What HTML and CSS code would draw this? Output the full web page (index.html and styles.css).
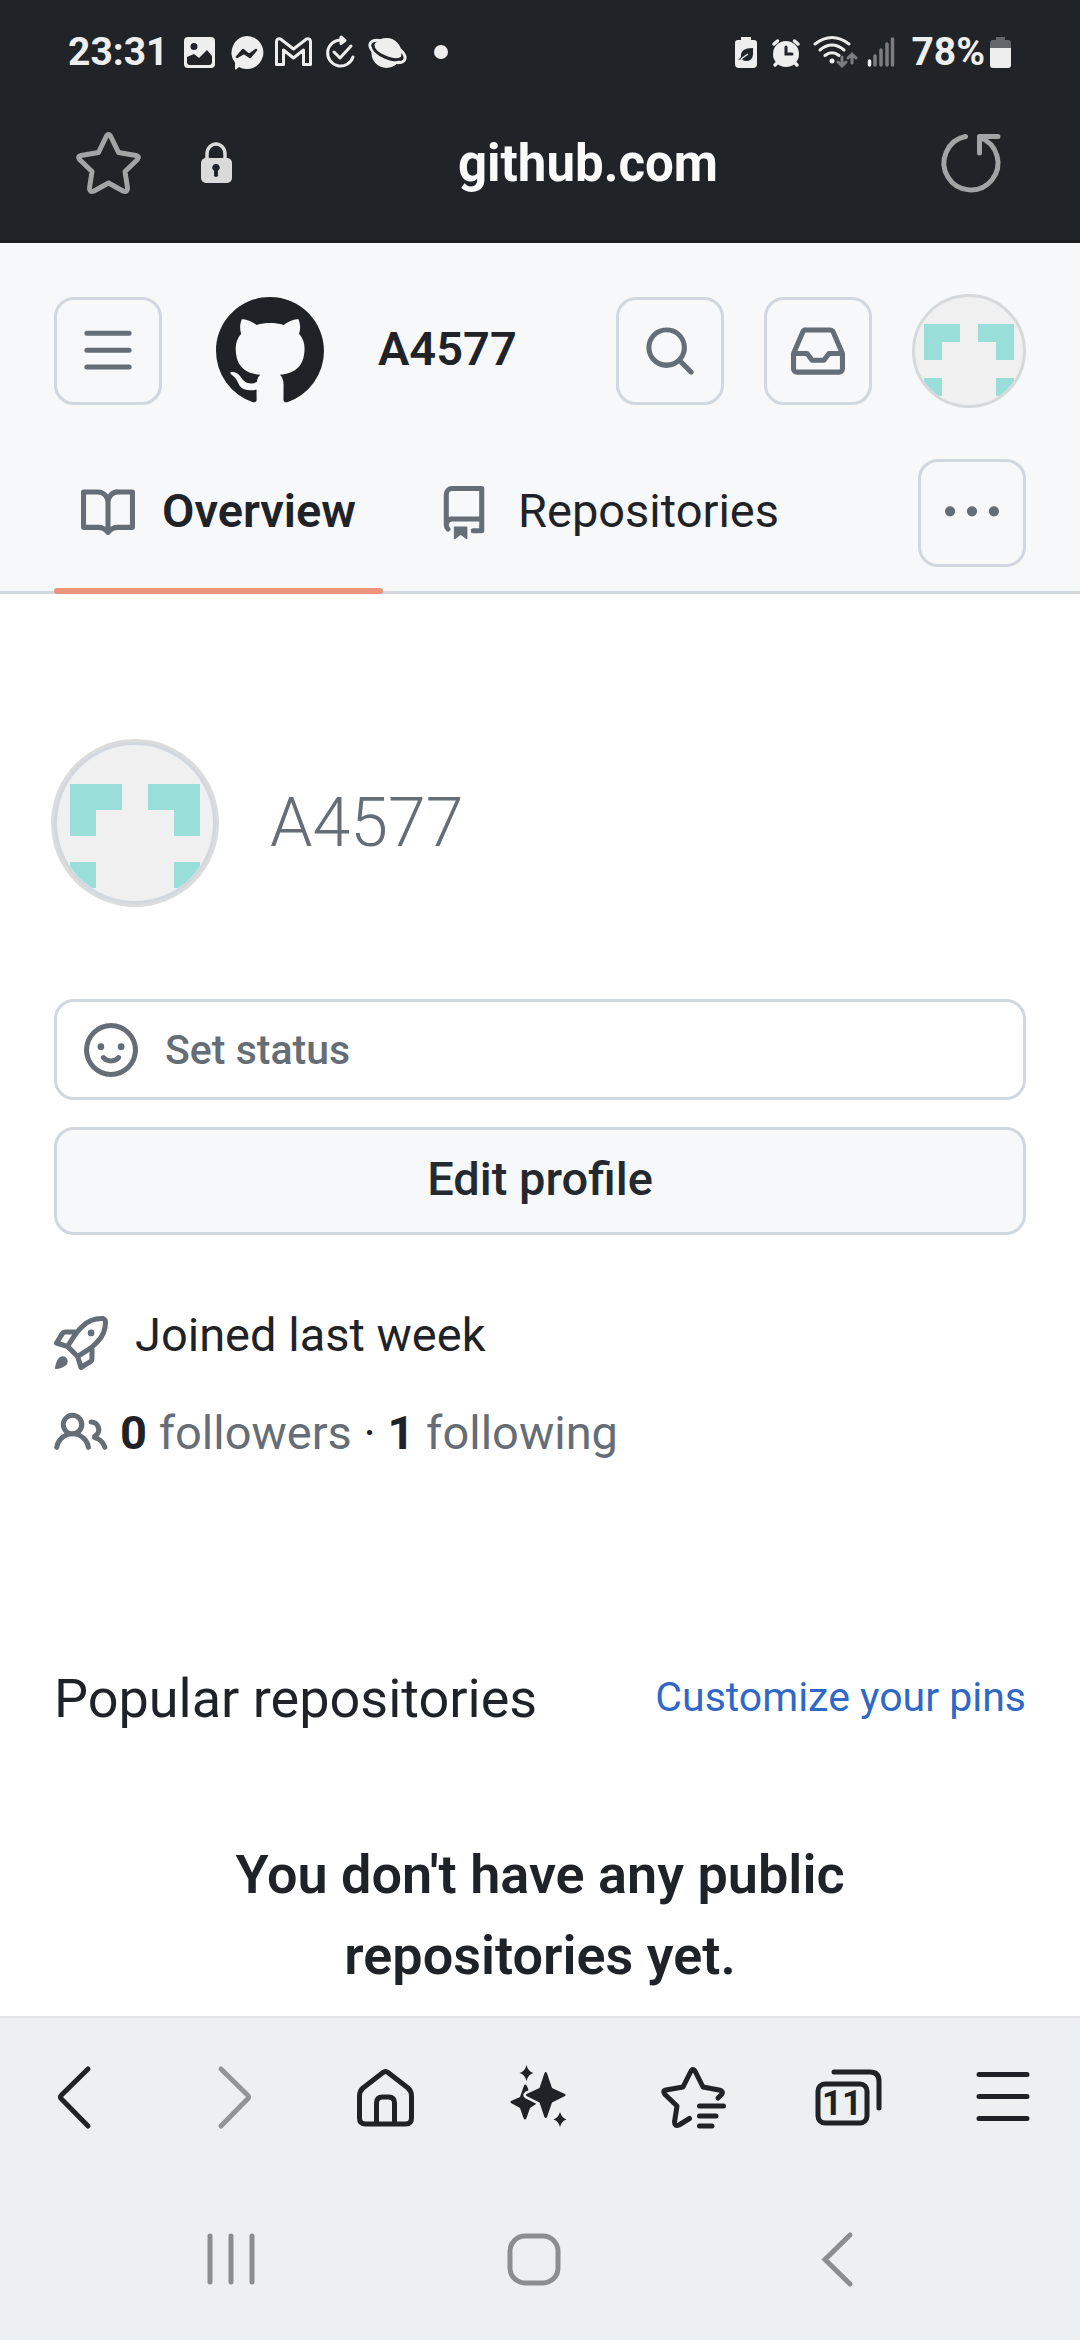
FILE: index.html
```html
<!DOCTYPE html>
<html lang="en">
<head>
<meta charset="utf-8">
<meta name="viewport" content="width=device-width, initial-scale=1">
<title>A4577</title>
<link rel="stylesheet" href="styles.css">
</head>
<body>
<div class="browser-top">
  <div class="status-bar">
    <div class="status-left">
      <span class="clock">23:31</span>
      <svg class="status-icon" viewBox="0 0 47 40" fill="#eee"><path fill-rule="evenodd" d="M12 5h23a4 4 0 0 1 4 4v23a4 4 0 0 1-4 4H12a4 4 0 0 1-4-4V9a4 4 0 0 1 4-4Zm6 6a3.500 3.500 0 1 0 0 7 3.500 3.500 0 0 0 0-7Zm-7 14v5q0 3 3 3h19q3 0 3-3v-6l-5-6-8 8-5-4Z"/></svg>
      <svg class="status-icon" viewBox="0 0 47 40"><path fill="#eee" d="M24 4a16.500 16.500 0 1 1-8 31l-3 2.500q-1 .5-1-1v-6A16.500 16.500 0 0 1 24 4Z"/><path d="M14 25l6-7 6 5 7-5-6 7-6-4Z" fill="#202328" stroke="#202328" stroke-width="2.500" stroke-linejoin="round"/></svg>
      <svg class="status-icon" viewBox="0 0 47 40" fill="none" stroke="#eee" stroke-width="3" stroke-linejoin="round"><path d="M6.500 10q0-4 4-3l13 10 13-10q4-1 4 3v22.500h-7V18l-10 8-10-8v14.500h-7Z"/></svg>
      <svg class="status-icon" viewBox="0 0 47 40" fill="none" stroke="#eee" stroke-width="3" stroke-linecap="round" stroke-linejoin="round"><path d="M24 8A13 13 0 1 0 36 25M17 20l6 6 11-12"/><path d="M24 5l4 3.500-4 3Z" fill="#eee"/></svg>
      <svg class="status-icon" viewBox="0 0 47 40" fill="none"><circle cx="22.500" cy="21" r="15" fill="#eee"/><ellipse cx="23.500" cy="19.500" rx="19" ry="8.500" transform="rotate(25 23.500 19.500)" stroke="#eee" stroke-width="3"/><path d="M9 13Q9 20 21 25T37.500 26" stroke="#202328" stroke-width="3" stroke-linecap="round"/></svg>
      <svg class="status-dot" viewBox="0 0 60 40" fill="#eee"><circle cx="30" cy="20" r="7"/></svg>
    </div>
    <div class="status-right">
      <svg width="32" height="40" viewBox="0 0 32 40"><path fill="#eee" d="M11 5h10v3h3q3 0 3 3v21q0 4-4 4H9q-4 0-4-4V11q0-3 3-3h3Z"/><path fill="#202328" d="M23 16v7q-1 6-7 6-3 0-4-2l-4 1 3-3q-1-9 12-9Z"/><path d="M11 27l7-5" stroke="#eee" stroke-width="1.500"/></svg>
      <svg width="32" height="40" viewBox="0 0 32 40" stroke-linecap="round"><circle cx="16" cy="22" r="13" fill="#eee"/><path d="M4 12l3.500-3M28 12l-3.500-3M5 33l4-4M27 33l-4-4" stroke="#eee" stroke-width="3.500"/><path d="M16 15v7h6" stroke="#202328" stroke-width="3" fill="none"/></svg>
      <svg width="49" height="40" viewBox="0 0 49 40" fill="none" stroke-width="3" stroke-linecap="round"><path d="M5 12Q22 -1 39 12M10 18Q22 8 34 18M15 23.500Q22 18 29 23.500" stroke="#eee"/><circle cx="22" cy="29" r="2.500" fill="#eee"/><path d="M32 25v9m-4-4l4 4 4-4M42 31v-9m-4 4l4-4 4 4" stroke="#7b7d80"/></svg>
      <svg width="30" height="40" viewBox="0 0 30 40" stroke="#7b7d80" stroke-width="3.500" stroke-linecap="round"><path d="M2.500 29v4" stroke="#eee"/><path d="M8 24v9M14 18v15M20 12v21M25.500 7v26"/></svg>
      <span class="battery-level">78%</span>
      <svg width="23" height="40" viewBox="0 0 23 40"><path fill="#63666a" d="M7 5h9v3h3q3 0 3 3v7H1v-7q0-3 3-3h3Z"/><path fill="#eee" d="M1 16h21v17q0 3-3 3H4q-3 0-3-3Z"/></svg>
    </div>
  </div>
  <div class="url-bar">
    <button class="plain" aria-label="Bookmark"><svg width="72" height="72" viewBox="0 0 72 72" fill="none" stroke="#a3a4a6" stroke-width="5" stroke-linejoin="round"><path d="M33.500 12q3-7 6 0L46.500 26.500 64 29.500q4 1 1.500 4L53 45.500 55.500 62q0 5-4.500 3L36.500 57 22 65q-4.500 2-4.500-3L20 45.500 7.500 33.500Q5 30.500 9 29.500L26.500 26.500Z"/></svg></button>
    <svg width="48" height="72" viewBox="0 0 48 72"><path d="M15 36V28a9 10 0 0 1 18 0v8" fill="none" stroke="#dadada" stroke-width="3.500"/><rect x="9" y="32" width="31" height="25" rx="5" fill="#dadada"/><path d="M24 38a3.500 3.500 0 0 1 2 6.500V50q-2 2-4 0V44.500A3.500 3.500 0 0 1 24 38Z" fill="#202328"/></svg>
    <span class="site">github.com</span>
    <button class="plain" aria-label="Reload"><svg width="72" height="72" viewBox="0 0 72 72" fill="none" stroke="#a3a4a6" stroke-width="5" stroke-linecap="round" stroke-linejoin="round"><path d="M29.500 10.500A27 27 0 1 0 44 11.500M62 10.500H43.500V27"/></svg></button>
  </div>
</div>

<header class="page-header">
  <div class="header-row">
    <button class="square" aria-label="Open menu"><svg class="octicon" viewBox="0 0 16 16"><path d="M1 2.750A.75.75 0 0 1 1.750 2h12.500a.75.75 0 0 1 0 1.500H1.750A.75.75 0 0 1 1 2.750Zm0 5A.75.75 0 0 1 1.750 7h12.500a.75.75 0 0 1 0 1.500H1.750A.75.75 0 0 1 1 7.750ZM1.750 12h12.500a.75.75 0 0 1 0 1.500H1.750a.75.75 0 0 1 0-1.500Z"/></svg></button>
    <a class="logo" href="#" aria-label="Homepage"><svg width="108" height="108" viewBox="0 0 16 16"><path d="M8 0c4.420 0 8 3.580 8 8a8.013 8.013 0 0 1-5.450 7.590c-.4.080-.55-.17-.55-.38 0-.27.010-1.130.010-2.200 0-.75-.25-1.230-.54-1.480 1.780-.2 3.650-.88 3.650-3.950 0-.88-.31-1.590-.82-2.150.080-.2.360-1.020-.08-2.120 0 0-.67-.22-2.200.82-.64-.18-1.320-.27-2-.27-.68 0-1.360.09-2 .27-1.530-1.030-2.200-.82-2.200-.82-.44 1.100-.16 1.920-.08 2.120-.51.56-.82 1.280-.82 2.150 0 3.060 1.860 3.750 3.640 3.950-.23.2-.44.55-.51 1.070-.46.210-1.610.55-2.330-.66-.15-.24-.6-.83-1.230-.82-.67.010-.27.380.010.530.340.190.730.9.820 1.130.160.450.680 1.310 2.690.940 0 .67.010 1.300.010 1.490 0 .210-.15.450-.55.380A7.995 7.995 0 0 1 0 8c0-4.420 3.580-8 8-8Z"/></svg></a>
    <a class="context" href="#">A4577</a>
    <div class="header-actions">
      <button class="square" aria-label="Search"><svg class="octicon" viewBox="0 0 16 16"><path d="M10.680 11.740a6 6 0 0 1-7.922-8.982 6 6 0 0 1 8.982 7.922l3.040 3.040a.749.749 0 0 1-.326 1.275.749.749 0 0 1-.734-.215ZM11.500 7a4.499 4.499 0 1 0-8.997 0A4.499 4.499 0 0 0 11.500 7Z"/></svg></button>
      <button class="square" aria-label="Notifications"><svg class="octicon" viewBox="0 0 16 16"><path d="M2.800 2.060A1.750 1.750 0 0 1 4.410 1h7.180c.7 0 1.333.417 1.610 1.060l2.740 6.395c.04.093.06.194.06.295v4.500A1.750 1.750 0 0 1 14.250 15H1.750A1.750 1.750 0 0 1 0 13.250v-4.500c0-.101.02-.202.06-.295Zm1.610.44a.25.25 0 0 0-.23.152L1.887 8H4.750a.75.75 0 0 1 .6.3L6.625 10h2.750l1.275-1.700a.75.75 0 0 1 .6-.3h2.863L11.820 2.652a.25.25 0 0 0-.23-.152Zm10.090 7h-2.875l-1.275 1.700a.75.75 0 0 1-.6.3h-3.500a.75.75 0 0 1-.6-.3L4.375 9.500H1.500v3.750c0 .138.112.25.25.25h12.500a.25.25 0 0 0 .25-.25Z"/></svg></button>
      <button class="plain" aria-label="Account menu"><svg class="avatar avatar-small" viewBox="0 0 420 420" fill="#99ded9"><path d="M35 105h140v70h-70v70H35ZM385 105H245v70h70v70h70ZM35 315h70v70H35ZM315 315h70v70h-70Z"/></svg></button>
    </div>
  </div>
  <nav class="tabs">
    <a class="tab current" href="#"><svg class="octicon" viewBox="0 0 16 16"><path d="M0 1.750A.75.75 0 0 1 .75 1h4.253c1.227 0 2.317.59 3 1.501A3.743 3.743 0 0 1 11.006 1h4.245a.75.75 0 0 1 .75.75v10.500a.75.75 0 0 1-.75.75h-4.507a2.250 2.250 0 0 0-1.591.659l-.622.621a.75.75 0 0 1-1.060 0l-.622-.621A2.250 2.250 0 0 0 5.258 13H.75a.75.75 0 0 1-.75-.75Zm7.251 10.324.004-5.073-.002-2.253A2.250 2.250 0 0 0 5.003 2.500H1.500v9h3.757a3.750 3.750 0 0 1 1.994.574ZM8.755 4.750l-.004 7.322a3.752 3.752 0 0 1 1.992-.572H14.500v-9h-3.495a2.250 2.250 0 0 0-2.250 2.250Z"/></svg><span class="label">Overview</span></a>
    <a class="tab" href="#"><svg class="octicon" viewBox="0 0 16 16"><path d="M2 2.500A2.500 2.500 0 0 1 4.500 0h8.750a.75.75 0 0 1 .75.75v12.500a.75.75 0 0 1-.75.75h-2.500a.75.75 0 0 1 0-1.500h1.750v-2h-8a1 1 0 0 0-.714 1.700.75.75 0 1 1-1.072 1.050A2.495 2.495 0 0 1 2 11.500Zm10.500-1h-8a1 1 0 0 0-1 1v6.708A2.486 2.486 0 0 1 4.500 9h8ZM5 12.250a.25.25 0 0 1 .25-.25h3.500a.25.25 0 0 1 .25.25v3.250a.25.25 0 0 1-.4.2l-1.450-1.087a.249.249 0 0 0-.3 0L5.400 15.700a.25.25 0 0 1-.4-.2Z"/></svg><span class="label">Repositories</span></a>
    <button class="square more" aria-label="More tabs"><svg class="octicon" viewBox="0 0 16 16"><circle cx="1.500" cy="7.500" r="1.500"/><circle cx="8" cy="7.500" r="1.500"/><circle cx="14.500" cy="7.500" r="1.500"/></svg></button>
  </nav>
</header>

<main class="profile">
  <div class="identity">
    <svg class="avatar avatar-large" viewBox="0 0 420 420" fill="#99ded9"><path d="M35 105h140v70h-70v70H35ZM385 105H245v70h70v70h70ZM35 315h70v70H35ZM315 315h70v70h-70Z"/></svg>
    <h1>A4577</h1>
  </div>
  <div class="profile-actions">
    <button class="status-button"><svg class="octicon" viewBox="0 0 16 16"><path fill-rule="evenodd" d="M8 0a8 8 0 1 1 0 16A8 8 0 0 1 8 0ZM1.500 8a6.500 6.500 0 1 0 13 0 6.500 6.500 0 0 0-13 0ZM12 7a1 1 0 1 1-2 0 1 1 0 0 1 2 0ZM5 8a1 1 0 1 1 0-2 1 1 0 0 1 0 2Z"/><path d="M5.750 10.250Q6.500 11.250 8 11.250T10.250 10.250" fill="none" stroke="currentColor" stroke-width="1.500" stroke-linecap="round"/></svg>Set status</button>
    <button class="edit-button"><span class="label">Edit profile</span></button>
  </div>
  <div class="details">
    <div class="joined"><svg class="octicon" viewBox="0 0 16 16"><path d="M14.064 0h.186C15.216 0 16 .784 16 1.750v.186a8.752 8.752 0 0 1-2.564 6.186l-.458.459c-.314.314-.641.616-.979.904v3.207c0 .608-.315 1.172-.833 1.490l-2.774 1.707a.749.749 0 0 1-1.110-.418l-.954-3.102a1.214 1.214 0 0 1-.145-.125L3.754 9.816a1.218 1.218 0 0 1-.124-.145L.528 8.717a.749.749 0 0 1-.418-1.110l1.710-2.774A1.748 1.748 0 0 1 3.310 4h3.204c.288-.338.59-.665.904-.979l.459-.458A8.749 8.749 0 0 1 14.064 0ZM8.938 3.623h-.002l-.458.458c-.76.76-1.437 1.598-2.020 2.500l-1.500 2.317 2.143 2.143 2.317-1.500c.902-.583 1.740-1.260 2.499-2.020l.459-.458a7.250 7.250 0 0 0 2.123-5.127V1.750a.25.25 0 0 0-.25-.25h-.186a7.249 7.249 0 0 0-5.125 2.123ZM3.560 14.560c-.732.732-2.334 1.045-3.005 1.148a.234.234 0 0 1-.201-.064.234.234 0 0 1-.064-.201c.103-.671.416-2.273 1.150-3.003a1.502 1.502 0 1 1 2.120 2.120Zm6.940-3.935c-.088.06-.177.118-.266.175l-2.350 1.521.548 1.783 1.949-1.200a.25.25 0 0 0 .119-.213ZM3.678 8.116 5.200 5.766c.058-.09.117-.178.176-.266H3.309a.25.25 0 0 0-.213.119l-1.200 1.950ZM12 5a1 1 0 1 1-2 0 1 1 0 0 1 2 0Z"/></svg>Joined last week</div>
    <div class="follows"><svg class="octicon" viewBox="0 0 16 16"><path d="M2 5.500a3.500 3.500 0 1 1 5.898 2.549 5.508 5.508 0 0 1 3.034 4.084.75.75 0 1 1-1.482.235 4 4 0 0 0-7.900 0 .75.75 0 0 1-1.482-.236A5.507 5.507 0 0 1 3.102 8.050 3.493 3.493 0 0 1 2 5.500ZM11 4a3.001 3.001 0 0 1 2.220 5.018 5.010 5.010 0 0 1 2.560 3.012.749.749 0 0 1-.885.954.752.752 0 0 1-.549-.514 3.507 3.507 0 0 0-2.522-2.372.75.75 0 0 1-.574-.73v-.352a.75.75 0 0 1 .416-.672A1.500 1.500 0 0 0 11 5.500.75.75 0 0 1 11 4Zm-5.500-.5a2 2 0 1 0-.001 3.999A2 2 0 0 0 5.500 3.500Z"/></svg><span><a href="#"><b>0</b> followers</a> · <a href="#"><b>1</b> following</a></span></div>
  </div>
  <section class="popular">
    <div class="popular-head">
      <h2>Popular repositories</h2>
      <a href="#">Customize your pins</a>
    </div>
    <h3>You don't have any public repositories yet.</h3>
  </section>
</main>

<footer class="browser-bottom">
  <div class="toolbar">
    <button class="plain" aria-label="Back"><svg class="tool" viewBox="0 0 72 72"><path d="M47 8L20.500 34q-2 2 0 4L47 65"/></svg></button>
    <button class="plain faded" aria-label="Forward"><svg class="tool" viewBox="0 0 72 72"><path d="M26 8L52.500 34q2 2 0 4L26 65"/></svg></button>
    <button class="plain" aria-label="Home"><svg class="tool" viewBox="0 0 72 72"><path d="M33 11.500q2.500-2 5 0L58 27q3.500 3 3.500 8v22q0 6-6 6h-40q-6 0-6-6V35q0-5 3.500-8ZM26.500 62V42q0-6 6-6h6q6 0 6 6V62"/></svg></button>
    <button class="plain" aria-label="Assistant"><svg width="72" height="72" viewBox="0 0 72 72" fill="#1f2327"><path d="M22.500 4q1.500 6.500 7 8-5.500 1.500-7 8-1.500-6.500-7-8 5.500-1.500 7-8Z"/><path d="M21 23.500q1.500 0 3 4l2 8 6 6v1.500l-6 4-3.500 10q-1.500 3-3 0L16 47 7 42q-1.500-1 0-2l9-4 3.500-10q.5-2.500 1.500-2.500Z"/><path class="sparkle" d="M40.500 12q1.200-2 2.400 0L48 27l13 6q1.500 1 0 2L48 41.500 43 56q-1.300 2-2.600 0L35.500 41.500 22.500 35q-1.500-1 0-2l13-6Z"/><path d="M56 51q1.500 5.500 6.500 7.500-5 1.500-6.500 7.500-1.500-6-6.500-7.500 5-2 6.500-7.500Z"/></svg></button>
    <button class="plain" aria-label="Bookmarks"><svg class="tool" viewBox="0 0 72 72"><path d="M31.500 57.500L21 64q-4.500 2-4.500-3L19 45 7 33.500Q4 30 8 29L25 26 32.500 11q2.500-5 5 0L45 26l16 3q5 1 2.500 4.500L60 37M41.500 45h24M41.500 55h16.500M41.500 65h12.500"/></svg></button>
    <button class="plain" aria-label="11 open tabs"><svg class="tool" viewBox="0 0 72 72"><rect x="5" y="23" width="49" height="39" rx="7"/><path d="M21 11h36q9 0 9 9v27"/><text class="tab-count" x="29" y="54">11</text></svg></button>
    <button class="plain" aria-label="Menu"><svg class="tool" viewBox="0 0 72 72"><path d="M12 13.500h48M12 35.500h48M12 57.500h48"/></svg></button>
  </div>
  <div class="system-nav">
    <button class="plain" aria-label="Recent apps"><svg class="tool" viewBox="0 0 72 72"><path d="M15 13v46M36 13v46M57 13v46"/></svg></button>
    <button class="plain" aria-label="Home screen"><svg class="tool" viewBox="0 0 72 72"><rect x="12" y="13" width="48" height="47" rx="15"/></svg></button>
    <button class="plain" aria-label="System back"><svg class="tool sharp" viewBox="0 0 72 72"><path d="M49 12L24 36.500 49 61"/></svg></button>
  </div>
</footer>
</body>
</html>
```

FILE: styles.css
```css
* {
  box-sizing: border-box;
}

body {
  margin: 0;
  min-height: 100vh;
  display: flex;
  flex-direction: column;
  background: #fff;
  color: #1f2328;
  font-family: Roboto, "Liberation Sans", sans-serif;
  font-size: 47px;
  line-height: 70px;
}

svg {
  display: block;
  flex: none;
}

a {
  color: inherit;
  text-decoration: none;
}

button {
  font: inherit;
  color: inherit;
}

h1,
h2,
h3 {
  margin: 0;
}

.plain {
  padding: 0;
  border: 0;
  background: none;
}

/* Browser chrome, top */
.browser-top {
  background: #202328;
  border-bottom: 3px solid #1b1d1f;
  padding-bottom: 20px;
}

.status-bar {
  height: 104px;
  padding: 0 68px;
  display: flex;
  align-items: center;
  justify-content: space-between;
  color: #eee;
  font-size: 39px;
  font-weight: 700;
}

.status-left,
.status-right {
  display: flex;
  align-items: center;
}

.status-right {
  gap: 8px;
}

.clock {
  width: 108px;
}

.battery-level {
  margin: 0 -4px 0 6px;
}

.status-icon {
  width: 47px;
  height: 40px;
}

.status-dot {
  width: 60px;
  height: 40px;
}

.url-bar {
  height: 116px;
  padding: 0 72px;
  display: flex;
  align-items: center;
}

.url-bar .plain:first-child {
  margin-right: 48px;
}

.site {
  flex: 1;
  padding-top: 4px;
  text-align: center;
  color: #fafafa;
  font-size: 51px;
  font-weight: 700;
}

/* Page header */
.page-header {
  background: #f6f8fa;
  border-bottom: 3px solid #d0d7de;
  padding: 54px 54px 0;
}

.header-row {
  display: flex;
  align-items: center;
  gap: 54px;
  height: 108px;
}

.octicon {
  width: 54px;
  height: 54px;
  fill: currentColor;
  color: #656d76;
}

.square {
  width: 108px;
  height: 108px;
  padding: 0;
  display: grid;
  place-items: center;
  border: 3px solid #d0d7de;
  border-radius: 20px;
  background: none;
}

.logo {
  fill: #1f2328;
}

.context,
.label {
  padding-bottom: 4px;
}

.context {
  font-weight: 600;
}

.header-actions {
  margin-left: auto;
  display: flex;
  align-items: center;
  gap: 40px;
}

.avatar {
  border-radius: 50%;
  background: #f0f0f0;
}

.avatar-small {
  width: 114px;
  height: 114px;
  border: 3px solid #d6d8da;
}

.tabs {
  margin-top: 54px;
  display: flex;
  gap: 27px;
}

.tab {
  position: relative;
  display: flex;
  align-items: center;
  gap: 27px;
  height: 108px;
  margin-bottom: 24px;
  padding: 0 27px;
}

.tab.current {
  font-weight: 600;
}

.tab.current::after {
  content: "";
  position: absolute;
  left: 0;
  right: 0;
  bottom: -27px;
  height: 6px;
  border-radius: 3px;
  background: #ec947c;
}

.more {
  margin-left: auto;
}

/* Profile */
.profile {
  padding: 148px 54px 20px;
}

.identity {
  display: flex;
  align-items: center;
  gap: 54px;
}

.avatar-large {
  width: 162px;
  height: 162px;
  border: 3px solid #d3d8df;
  box-shadow: 0 0 0 3px #dcdcdc;
}

.identity h1 {
  color: #656d76;
  font-size: 68px;
  font-weight: 300;
}

.profile-actions {
  margin-top: 95px;
  display: grid;
  gap: 27px;
}

.status-button,
.edit-button {
  border: 3px solid #d0d7de;
  border-radius: 20px;
  font-weight: 500;
}

.status-button {
  display: flex;
  align-items: center;
  gap: 27px;
  height: 101px;
  padding: 0 27px;
  background: #fff;
  color: #656d76;
  font-size: 41px;
}

.edit-button {
  display: flex;
  align-items: center;
  justify-content: center;
  height: 108px;
  background: #f6f8fa;
  color: #24292f;
}

.details {
  margin-top: 65px;
  display: grid;
  gap: 28px;
}

.joined {
  display: flex;
  align-items: flex-end;
  gap: 27px;
}

.follows {
  display: flex;
  align-items: center;
  gap: 12px;
}

.follows a {
  color: #656d76;
}

.follows b {
  color: #1f2328;
}

.popular {
  margin-top: 190px;
}

.popular-head {
  display: flex;
  align-items: center;
  justify-content: space-between;
}

.popular h2 {
  font-size: 54px;
  line-height: 81px;
  font-weight: 400;
}

.popular-head a {
  padding-bottom: 4px;
  color: #3068c8;
  font-size: 41px;
}

.popular h3 {
  margin-top: 95px;
  padding: 0 108px;
  text-align: center;
  font-size: 54px;
  line-height: 81px;
  font-weight: 600;
}

/* Browser chrome, bottom */
.browser-bottom {
  margin-top: auto;
  background: #ecf0f3;
  border-top: 2px solid #e3e5e6;
}

.toolbar {
  height: 160px;
  padding-bottom: 2px;
  display: grid;
  grid-template-columns: repeat(7, 1fr);
  place-items: center;
}

.tool {
  width: 72px;
  height: 72px;
  fill: none;
  stroke: #1f2327;
  stroke-width: 5px;
  stroke-linecap: round;
  stroke-linejoin: round;
}

.faded .tool {
  stroke: #929597;
}

/* The big star keeps a background-coloured halo over its neighbour */
.sparkle {
  stroke: #ecf0f3;
  stroke-width: 5px;
  paint-order: stroke;
}

.tab-count {
  fill: #1f2327;
  stroke: none;
  font-size: 35px;
  font-weight: 700;
  text-anchor: middle;
}

.system-nav {
  height: 162px;
  padding: 0 92px 0 80px;
  display: grid;
  grid-template-columns: repeat(3, 1fr);
  place-items: center;
}

.system-nav .tool {
  stroke: #8c8d8f;
}

.system-nav .sharp {
  stroke-linejoin: miter;
}
```
